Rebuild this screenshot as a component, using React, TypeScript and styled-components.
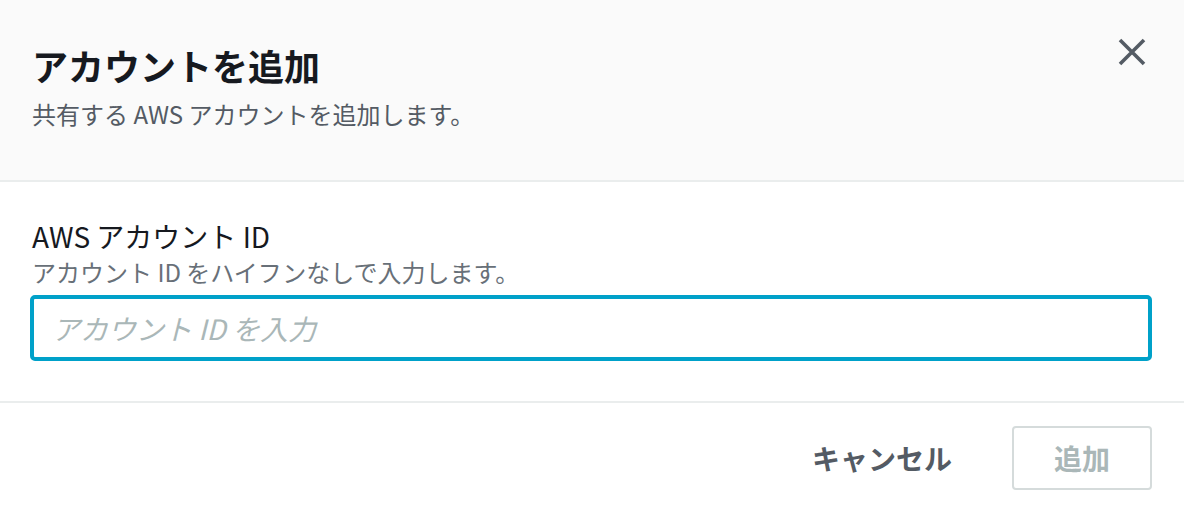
import { createGlobalStyle } from "styled-components";
import styled from "styled-components";

const GlobalStyle = createGlobalStyle`
  html, body {
    margin: 0;
    padding: 0;
    background: #ffffff;
  }
  body {
    font-family: "Noto Sans CJK JP", "Noto Sans", sans-serif;
    color: #16191f;
  }
`;

const Modal = styled.div`
  width: 1184px;
  height: 512px;
  display: flex;
  flex-direction: column;
  background: #ffffff;
  overflow: hidden;
`;

const Header = styled.div`
  height: 182px;
  box-sizing: border-box;
  padding: 43px 32px 0 32px;
  background: #fafafa;
  border-bottom: 2px solid #eaeded;
  display: flex;
  justify-content: space-between;
  align-items: flex-start;
`;

const HeaderText = styled.div`
  display: flex;
  flex-direction: column;
  gap: 11px;
`;

const Title = styled.h2`
  margin: 0;
  font-size: 36px;
  line-height: 44px;
  font-weight: 700;
  color: #16191f;
`;

const Subtitle = styled.p`
  margin: 0;
  font-size: 24px;
  line-height: 32px;
  color: #545b64;
`;

const CloseButton = styled.button`
  width: 40px;
  height: 40px;
  margin-top: -11px;
  padding: 0;
  border: none;
  background: transparent;
  display: flex;
  align-items: center;
  justify-content: center;
  color: #545b64;
`;

const Body = styled.div`
  padding: 37px 32px 40px 30px;
  border-bottom: 2px solid #eaeded;
  display: flex;
  flex-direction: column;
`;

const Label = styled.label`
  font-size: 28px;
  line-height: 34px;
  color: #16191f;
  padding-left: 2px;
`;

const Description = styled.div`
  font-size: 24px;
  line-height: 32px;
  color: #687078;
  padding-left: 2px;
  margin-top: 3px;
  margin-bottom: 7px;
`;

const Input = styled.input`
  box-sizing: border-box;
  width: 1122px;
  height: 66px;
  border: 4px solid #00a1c9;
  border-radius: 5px;
  padding: 0 18px;
  font-family: "Noto Sans CJK JP", "Noto Sans", sans-serif;
  font-size: 28px;
  outline: none;
  background: #ffffff;
  &::placeholder {
    color: #aab7b8;
    font-style: italic;
  }
`;

const Footer = styled.div`
  flex: 1;
  display: flex;
  justify-content: flex-end;
  align-items: flex-start;
  gap: 60px;
  padding: 23px 32px 0 0;
`;

const TextButton = styled.button`
  border: none;
  background: transparent;
  padding: 0;
  height: 64px;
  font-family: "Noto Sans CJK JP", "Noto Sans", sans-serif;
  font-size: 28px;
  font-weight: 700;
  color: #545b64;
`;

const OutlineButton = styled.button<{ disabled?: boolean }>`
  box-sizing: border-box;
  width: 140px;
  height: 64px;
  border: 2px solid #d5dbdb;
  border-radius: 4px;
  background: #ffffff;
  font-family: "Noto Sans CJK JP", "Noto Sans", sans-serif;
  font-size: 28px;
  font-weight: 700;
  color: ${(p) => (p.disabled ? "#aab7b8" : "#545b64")};
`;

export default function App() {
  return (
    <>
      <GlobalStyle />
      <Modal>
        <Header>
          <HeaderText>
            <Title>アカウントを追加</Title>
            <Subtitle>共有する AWS アカウントを追加します。</Subtitle>
          </HeaderText>
          <CloseButton aria-label="閉じる">
            <svg width="30" height="30" viewBox="0 0 30 30">
              <path
                d="M3 3 L27 27 M27 3 L3 27"
                stroke="currentColor"
                strokeWidth="3.6"
                fill="none"
              />
            </svg>
          </CloseButton>
        </Header>
        <Body>
          <Label>AWS アカウント ID</Label>
          <Description>アカウント ID をハイフンなしで入力します。</Description>
          <Input placeholder="アカウント ID を入力" />
        </Body>
        <Footer>
          <TextButton>キャンセル</TextButton>
          <OutlineButton disabled>追加</OutlineButton>
        </Footer>
      </Modal>
    </>
  );
}
